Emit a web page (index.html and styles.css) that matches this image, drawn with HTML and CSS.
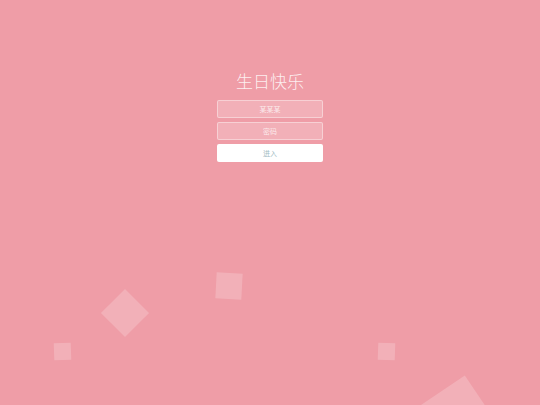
FILE: index.html
```html
<!DOCTYPE html>
<html lang="zh">
<head>
<meta charset="utf-8">
<link rel="stylesheet" href="styles.css">
</head>
<body>
<div class="page">
  <div class="form-box">
    <h1 class="title">生日快乐</h1>
    <div class="field">某某某</div>
    <div class="field">密码</div>
    <button class="enter">进入</button>
  </div>
  <div class="bubbles">
    <span class="sq sq1"></span>
    <span class="sq sq2"></span>
    <span class="sq sq3"></span>
    <span class="sq sq4"></span>
    <span class="sq sq5"></span>
  </div>
</div>
</body>
</html>
```
FILE: styles.css
```css
html, body {
  margin: 0;
  padding: 0;
  width: 540px;
  height: 405px;
  overflow: hidden;
  background: #ef9da7;
  font-family: "Noto Sans CJK SC", "Noto Sans", sans-serif;
}
.page {
  position: relative;
  width: 540px;
  height: 405px;
  overflow: hidden;
}
.form-box {
  width: 106px;
  margin: 0 auto;
  padding-top: 70px;
  display: flex;
  flex-direction: column;
  gap: 4px;
}
.title {
  margin: 0 -40px 5px;
  font-size: 17px;
  line-height: 21px;
  font-weight: 300;
  color: rgba(255, 255, 255, 0.85);
  text-align: center;
}
.field {
  box-sizing: border-box;
  height: 18px;
  border: 1px solid rgba(255, 255, 255, 0.4);
  background: rgba(255, 255, 255, 0.2);
  border-radius: 2px;
  color: rgba(255, 255, 255, 0.75);
  font-size: 7px;
  line-height: 16px;
  text-align: center;
}
.enter {
  box-sizing: border-box;
  height: 18px;
  border: 0;
  border-radius: 2px;
  background: #ffffff;
  color: #a3bcc4;
  font-family: inherit;
  font-size: 7px;
  line-height: 18px;
  padding: 0;
}
.sq {
  position: absolute;
  background: rgba(255, 255, 255, 0.2);
}
.sq1 {
  left: 108px; top: 296px; width: 34px; height: 34px;
  transform: rotate(45deg);
}
.sq2 {
  left: 216px; top: 273px; width: 26px; height: 26px;
  transform: rotate(3deg);
}
.sq3 {
  left: 54px; top: 343px; width: 17px; height: 17px;
  transform: rotate(-2deg);
}
.sq4 {
  left: 378px; top: 343px; width: 17px; height: 17px;
  transform: rotate(2deg);
}
.sq5 {
  left: 414px; top: 391px; width: 80px; height: 80px;
  transform: rotate(-34deg);
}
```
